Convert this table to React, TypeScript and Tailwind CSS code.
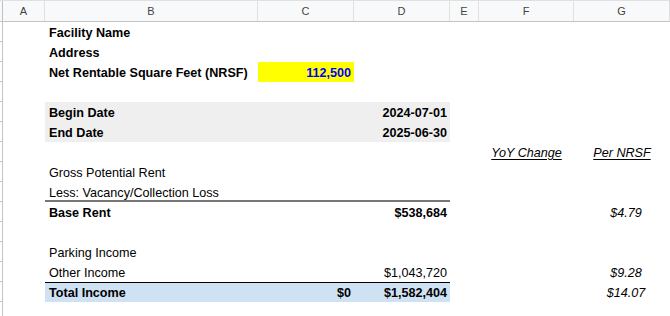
type Cell = {
  text?: string;
  cls?: string;
};

type Row = {
  b?: Cell;
  c?: Cell;
  d?: Cell;
  f?: Cell;
  g?: Cell;
  band?: string; // background + line across B..D
};

const COLS = "grid grid-cols-[3px_42px_213px_96px_96px_29px_95px_96px]";
const HEADERS = ["A", "B", "C", "D", "E", "F", "G"];

const GRAY = "bg-[#efefef]";
const BASE_LINE = "shadow-[inset_0_-2px_0_#777]";
const TOTAL = "bg-[#cfe2f3] shadow-[inset_0_1px_0_#000]";

const ROWS: Row[] = [
  { b: { text: "Facility Name", cls: "font-bold" } },
  { b: { text: "Address", cls: "font-bold" } },
  {
    b: { text: "Net Rentable Square Feet (NRSF)", cls: "font-bold" },
    c: { text: "112,500", cls: "font-bold text-[#0000ff] bg-[#ffff00]" },
  },
  {},
  { b: { text: "Begin Date", cls: "font-bold" }, d: { text: "2024-07-01", cls: "font-bold" }, band: GRAY },
  { b: { text: "End Date", cls: "font-bold" }, d: { text: "2025-06-30", cls: "font-bold" }, band: GRAY },
  {
    f: { text: "YoY Change", cls: "italic underline underline-offset-2" },
    g: { text: "Per NRSF", cls: "italic underline underline-offset-2 -ml-2" },
  },
  { b: { text: "Gross Potential Rent" } },
  { b: { text: "Less: Vacancy/Collection Loss" }, band: BASE_LINE },
  {
    b: { text: "Base Rent", cls: "font-bold" },
    d: { text: "$538,684", cls: "font-bold" },
    g: { text: "$4.79", cls: "italic" },
  },
  {},
  { b: { text: "Parking Income" } },
  { b: { text: "Other Income" }, d: { text: "$1,043,720" }, g: { text: "$9.28", cls: "italic" } },
  {
    b: { text: "Total Income", cls: "font-bold" },
    c: { text: "$0", cls: "font-bold" },
    d: { text: "$1,582,404", cls: "font-bold" },
    g: { text: "$14.07", cls: "italic" },
    band: TOTAL,
  },
  {},
];

function Body({ cell, align, band }: { cell?: Cell; align: string; band?: string }) {
  return (
    <div className={`flex h-[20px] items-end pb-[1px] ${align} ${band ?? ""} ${cell?.cls ?? ""}`}>
      <span className="translate-y-[2px] whitespace-nowrap">{cell?.text}</span>
    </div>
  );
}

export default function App() {
  return (
    <div
      className="h-[316px] w-[670px] overflow-hidden bg-white text-[12.6px] text-black"
      style={{ fontFamily: '"Liberation Sans", Arial, sans-serif' }}
    >
      <div className={`${COLS} h-[22px] border-t border-b border-[#e0e0e0] border-b-[#c4c4c4] bg-[#f8f9fa]`}>
        <div className="border-r border-[#c0c0c0]" />
        {HEADERS.map((h) => (
          <div
            key={h}
            className="flex items-center justify-center border-r border-[#e0e0e0] text-[11px] text-[#444]"
          >
            {h}
          </div>
        ))}
      </div>
      {ROWS.map((r, i) => (
        <div key={i} className={COLS}>
          <div className="h-[20px] border-r border-b border-[#c4c4c4]" />
          <div />
          <Body cell={r.b} align="justify-start pl-1" band={r.band} />
          <Body cell={r.c} align="justify-end pr-[3px]" band={r.band} />
          <Body cell={r.d} align="justify-end pr-[3px]" band={r.band} />
          <div />
          <Body cell={r.f} align="justify-center" />
          <Body cell={r.g} align="justify-center pl-2" />
        </div>
      ))}
    </div>
  );
}
